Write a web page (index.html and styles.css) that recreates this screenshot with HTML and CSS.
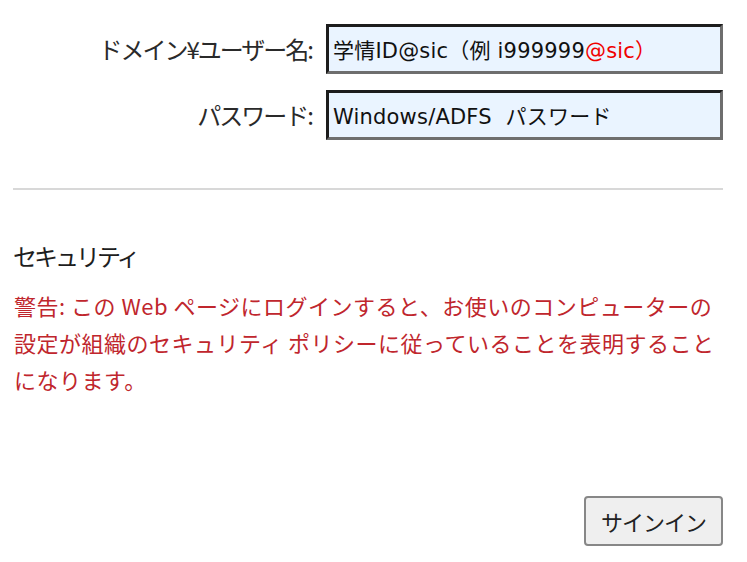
FILE: index.html
```html
<!DOCTYPE html>
<html>
<head>
    <meta charset="UTF-8">
    <title>サインイン</title>
    <link rel="stylesheet" href="styles.css">
</head>
<body>
    <div class="page">
        <div class="form">
            <div class="row">
                <label class="label">ドメイン¥ユーザー名:</label>
                <div class="field">学情ID@sic（例 i999999<span class="hint">@sic）</span></div>
            </div>
            <div class="row">
                <label class="label">パスワード:</label>
                <div class="field">Windows/ADFS&nbsp; パスワード</div>
            </div>
        </div>

        <hr class="divider">

        <h2 class="title">セキュリティ</h2>
        <p class="warning">警告: この Web ページにログインすると、お使いのコンピューターの<br>設定が組織のセキュリティ ポリシーに従っていることを表明すること<br>になります。</p>

        <div class="actions">
            <button type="button" class="signin">サインイン</button>
        </div>
    </div>
</body>
</html>
```

FILE: styles.css
```css
* {
    margin: 0;
    padding: 0;
    box-sizing: border-box;
}

body {
    background: #fff;
    font-family: "Noto Sans CJK JP", sans-serif;
    color: #222;
}

.page {
    width: 723px;
    padding: 24px 0 0 13px;
}

.form {
    display: flex;
    flex-direction: column;
    gap: 16px;
}
.row {
    display: flex;
    align-items: center;
    gap: 14px;
}
.label {
    width: 299px;
    text-align: right;
    font-size: 24px;
    letter-spacing: -2px;
    line-height: 30px;
    color: #2a2a2a;
}
.field {
    width: 397px;
    height: 50px;
    padding: 0 4px;
    display: flex;
    align-items: center;
    background: #eaf4ff;
    border: 3px solid;
    border-color: #1c1c1c #6e6e6e #6e6e6e #1c1c1c;
    font-family: "DejaVu Sans", "Noto Sans CJK JP", sans-serif;
    font-size: 21px;
    letter-spacing: 0.2px;
    color: #111;
    white-space: nowrap;
}
.hint {
    color: #f00000;
}

.divider {
    border: none;
    height: 2px;
    background: #d8d8d8;
    margin-top: 48px;
}

.title {
    margin-top: 51px;
    font-size: 24px;
    font-weight: normal;
    letter-spacing: -3px;
    line-height: 30px;
    color: #1e1e1e;
}
.warning {
    margin-top: 16px;
    padding-left: 1px;
    font-size: 22px;
    letter-spacing: 0.5px;
    line-height: 37px;
    color: #c0262d;
    white-space: nowrap;
}

.actions {
    display: flex;
    justify-content: flex-end;
    margin-top: 98px;
}
.signin {
    width: 139px;
    height: 50px;
    background: #efefef;
    border: 2px solid #878787;
    border-radius: 4px;
    font-family: "Noto Sans CJK JP", sans-serif;
    font-size: 22px;
    letter-spacing: -1px;
    color: #222;
    cursor: pointer;
}
```
